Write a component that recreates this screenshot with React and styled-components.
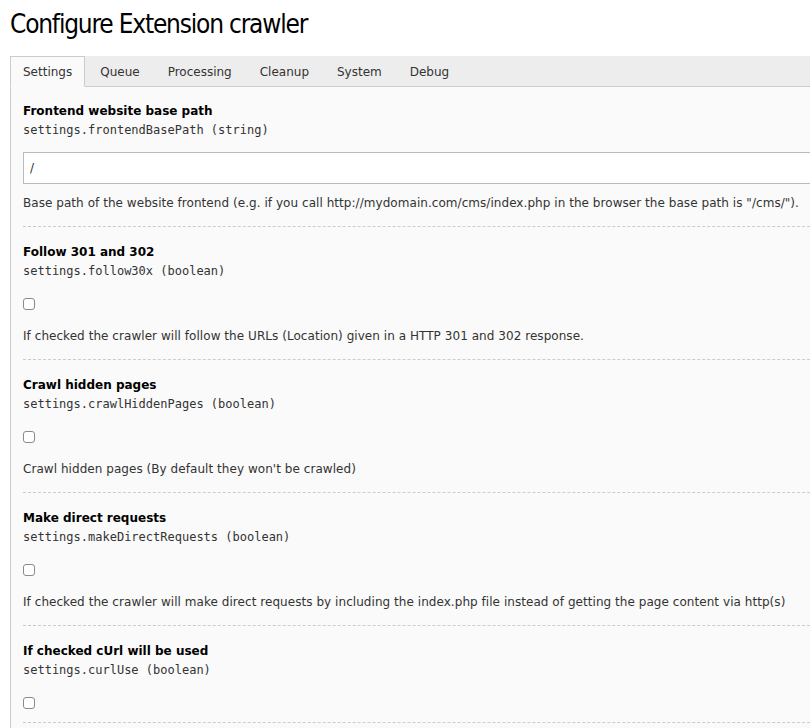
import React, { useState } from "react";
import styled, { createGlobalStyle } from "styled-components";

const GlobalStyle = createGlobalStyle`
  html, body {
    margin: 0;
    padding: 0;
    overflow: hidden;
    background: #ffffff;
  }
  body {
    font-family: "DejaVu Sans", Verdana, sans-serif;
    font-size: 12px;
    color: #333333;
  }
`;

const Page = styled.div`
  width: 900px;
  padding: 9px 0 0 10px;
`;

const Title = styled.h1`
  margin: 0 0 16px 0;
  font-family: "DejaVu Sans Condensed", "DejaVu Sans", sans-serif;
  font-stretch: condensed;
  font-weight: normal;
  font-size: 26px;
  line-height: 31px;
  letter-spacing: -1.2px;
  color: #000000;
`;

const TabBar = styled.div`
  display: flex;
  height: 30px;
  background: #ededed;
  border-bottom: 1px solid #cccccc;
`;

const Tab = styled.button`
  display: flex;
  align-items: center;
  margin: 0 2px -1px 0;
  padding: 0 12px;
  height: 31px;
  box-sizing: border-box;
  font-family: "DejaVu Sans", Verdana, sans-serif;
  font-size: 12px;
  color: #333333;
  cursor: pointer;
  border: 1px solid ${(p) => (p.$active ? "#cccccc" : "transparent")};
  border-bottom-color: ${(p) => (p.$active ? "#fafafa" : "transparent")};
  background: ${(p) => (p.$active ? "#fafafa" : "transparent")};
`;

const Panel = styled.div`
  background: #fafafa;
  border-left: 1px solid #cccccc;
  padding: 0 0 40px 12px;
`;

const Section = styled.div`
  padding: 16px 0 13px 0;
  border-bottom: 1px dashed #cccccc;

  &:first-child {
    padding-top: 15px;
  }
`;

const Label = styled.div`
  font-weight: bold;
  line-height: 19px;
  color: #000000;
`;

const Key = styled.div`
  font-family: "DejaVu Sans Mono", "Liberation Mono", monospace;
  font-size: 12px;
  line-height: 19px;
  color: #333333;
`;

const TextInput = styled.input`
  display: block;
  box-sizing: border-box;
  width: 100%;
  height: 32px;
  margin-top: 12px;
  padding: 0 6px;
  border: 1px solid #bbbbbb;
  border-radius: 0;
  background: #ffffff;
  font-family: "DejaVu Sans", Verdana, sans-serif;
  font-size: 12px;
  color: #333333;
  outline: none;
`;

const Check = styled.input.attrs({ type: "checkbox" })`
  appearance: none;
  display: block;
  width: 12px;
  height: 12px;
  margin: 17px 0 0 0;
  border: 1px solid #8a8a8a;
  border-radius: 3px;
  background: #ffffff;
  box-sizing: border-box;
`;

const Description = styled.div`
  margin-top: ${(p) => (p.$afterCheck ? "17px" : "10px")};
  line-height: 19px;
  letter-spacing: 0.05px;
  color: #333333;
  white-space: nowrap;
`;

const tabs = ["Settings", "Queue", "Processing", "Cleanup", "System", "Debug"];

const settings = [
  {
    label: "Frontend website base path",
    key: "settings.frontendBasePath (string)",
    type: "string",
    value: "/",
    description:
      'Base path of the website frontend (e.g. if you call http://mydomain.com/cms/index.php in the browser the base path is "/cms/").',
  },
  {
    label: "Follow 301 and 302",
    key: "settings.follow30x (boolean)",
    type: "boolean",
    description:
      "If checked the crawler will follow the URLs (Location) given in a HTTP 301 and 302 response.",
  },
  {
    label: "Crawl hidden pages",
    key: "settings.crawlHiddenPages (boolean)",
    type: "boolean",
    description: "Crawl hidden pages (By default they won't be crawled)",
  },
  {
    label: "Make direct requests",
    key: "settings.makeDirectRequests (boolean)",
    type: "boolean",
    description:
      "If checked the crawler will make direct requests by including the index.php file instead of getting the page content via http(s)",
  },
  {
    label: "If checked cUrl will be used",
    key: "settings.curlUse (boolean)",
    type: "boolean",
  },
];

export default function App() {
  const [activeTab, setActiveTab] = useState("Settings");

  return (
    <Page>
      <GlobalStyle />
      <Title>Configure Extension crawler</Title>
      <TabBar>
        {tabs.map((t) => (
          <Tab key={t} $active={t === activeTab} onClick={() => setActiveTab(t)}>
            {t}
          </Tab>
        ))}
      </TabBar>
      <Panel>
        {settings.map((s) => (
          <Section key={s.key}>
            <Label>{s.label}</Label>
            <Key>{s.key}</Key>
            {s.type === "string" ? (
              <TextInput defaultValue={s.value} />
            ) : (
              <Check />
            )}
            {s.description && (
              <Description $afterCheck={s.type === "boolean"}>{s.description}</Description>
            )}
          </Section>
        ))}
      </Panel>
    </Page>
  );
}
